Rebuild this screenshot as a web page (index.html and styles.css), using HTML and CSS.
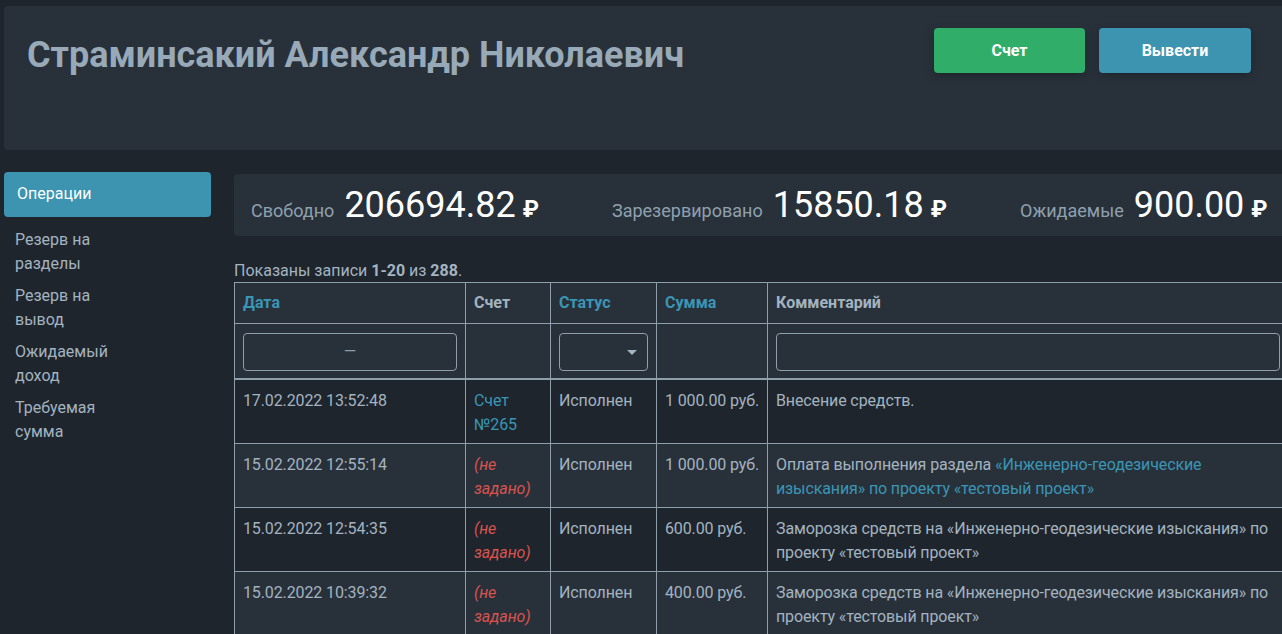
FILE: index.html
```html
<!DOCTYPE html>
<html lang="ru">
<head>
<meta charset="utf-8">
<title>Операции</title>
<link rel="stylesheet" href="styles.css">
</head>
<body>
<div class="page">
  <header class="head-card">
    <h1 class="title">Страминсакий Александр Николаевич</h1>
    <div class="actions">
      <a class="btn btn-green" href="#">Счет</a>
      <a class="btn btn-blue" href="#">Вывести</a>
    </div>
  </header>
  <div class="layout">
    <nav class="sidebar">
      <a class="nav-item active" href="#">Операции</a>
      <a class="nav-item" href="#"><span>Резерв на разделы</span></a>
      <a class="nav-item" href="#"><span>Резерв на вывод</span></a>
      <a class="nav-item" href="#"><span>Ожидаемый доход</span></a>
      <a class="nav-item" href="#"><span>Требуемая сумма</span></a>
    </nav>
    <main class="main">
      <div class="stats">
        <div class="stat"><span class="stat-label">Свободно</span><span class="stat-value">206694.82</span><span class="rub">₽</span></div>
        <div class="stat"><span class="stat-label">Зарезервировано</span><span class="stat-value">15850.18</span><span class="rub">₽</span></div>
        <div class="stat"><span class="stat-label">Ожидаемые</span><span class="stat-value">900.00</span><span class="rub">₽</span></div>
      </div>
      <div class="summary">Показаны записи <b>1-20</b> из <b>288</b>.</div>
      <table class="grid">
        <colgroup>
          <col class="c-date"><col class="c-acc"><col class="c-status"><col class="c-sum"><col class="c-comm">
        </colgroup>
        <thead>
          <tr class="head-row">
            <th><a href="#">Дата</a></th>
            <th>Счет</th>
            <th><a href="#">Статус</a></th>
            <th><a href="#">Сумма</a></th>
            <th>Комментарий</th>
          </tr>
          <tr class="filter-row">
            <td><div class="field field-date">—</div></td>
            <td></td>
            <td><div class="field field-select"><span class="caret"></span></div></td>
            <td></td>
            <td><div class="field"></div></td>
          </tr>
        </thead>
        <tbody>
          <tr class="odd">
            <td>17.02.2022 13:52:48</td>
            <td><a href="#">Счет №265</a></td>
            <td>Исполнен</td>
            <td class="sum">1 000.00 руб.</td>
            <td>Внесение средств.</td>
          </tr>
          <tr class="even">
            <td>15.02.2022 12:55:14</td>
            <td><span class="unset">(не задано)</span></td>
            <td>Исполнен</td>
            <td class="sum">1 000.00 руб.</td>
            <td>Оплата выполнения раздела <a href="#">«Инженерно-геодезические изыскания» по проекту «тестовый проект»</a></td>
          </tr>
          <tr class="odd">
            <td>15.02.2022 12:54:35</td>
            <td><span class="unset">(не задано)</span></td>
            <td>Исполнен</td>
            <td class="sum">600.00 руб.</td>
            <td>Заморозка средств на «Инженерно-геодезические изыскания» по проекту «тестовый проект»</td>
          </tr>
          <tr class="even">
            <td>15.02.2022 10:39:32</td>
            <td><span class="unset">(не задано)</span></td>
            <td>Исполнен</td>
            <td class="sum">400.00 руб.</td>
            <td>Заморозка средств на «Инженерно-геодезические изыскания» по проекту «тестовый проект»</td>
          </tr>
        </tbody>
      </table>
    </main>
  </div>
</div>
</body>
</html>
```
FILE: styles.css
```css
html, body {
  margin: 0;
  padding: 0;
  overflow: hidden;
  background: #1e252c;
}
body {
  font-family: Roboto, "Noto Sans", "Liberation Sans", sans-serif;
  color: #a4b3c0;
  font-size: 16px;
  line-height: 24px;
}
a { text-decoration: none; color: #3b95b5; }
.page {
  width: 1283px;
  margin-left: 4px;
  padding-top: 6px;
}
.head-card {
  background: #28313a;
  border-radius: 4px;
  min-height: 144px;
  box-sizing: border-box;
  padding: 22px 36px 22px 23px;
  display: flex;
  justify-content: space-between;
  align-items: flex-start;
}
.title {
  margin: 6px 0 0;
  font-size: 36px;
  line-height: 42px;
  font-weight: 700;
  color: #98a9b8;
}
.actions {
  display: flex;
  gap: 14px;
}
.btn {
  display: flex;
  align-items: center;
  justify-content: center;
  width: 151px;
  height: 45px;
  border-radius: 4px;
  color: #fff;
  font-weight: 700;
  font-size: 16px;
  box-shadow: 0 3px 8px rgba(0,0,0,0.25);
}
.btn-green { background: #30ad69; }
.btn-blue { background: #3c94b1; width: 152px; }
.layout {
  display: flex;
  gap: 23px;
  margin-top: 22px;
}
.sidebar {
  width: 207px;
  flex: none;
  display: flex;
  flex-direction: column;
}
.nav-item {
  display: block;
  color: #a4b3c0;
  padding: 4px 11px;
}
.nav-item span {
  display: block;
  max-width: 110px;
}
.nav-item.active {
  background: #3c94b1;
  color: #fff;
  border-radius: 4px;
  padding: 10px 13px 11px;
  margin-bottom: 7px;
}
.main {
  flex: 1;
  min-width: 0;
  padding-top: 2px;
}
.stats {
  background: #28313a;
  border-radius: 4px;
  height: 62px;
  box-sizing: border-box;
  padding: 9px 17px 0;
  display: flex;
  align-items: baseline;
  gap: 73px;
}
.stat {
  display: flex;
  align-items: baseline;
}
.stat-label {
  font-size: 18px;
  color: #8fa0ae;
  margin-right: 10px;
}
.stat-value {
  font-size: 36px;
  line-height: 44px;
  color: #fff;
}
.rub {
  font-size: 23px;
  font-weight: 700;
  color: #fff;
  margin-left: 7px;
}
.summary {
  margin-top: 23px;
  line-height: 24px;
  margin-bottom: -1px;
}
.summary b { color: #a4b3c0; }
.grid {
  border-collapse: collapse;
  table-layout: fixed;
  width: 1054px;
}
.c-date { width: 231px; }
.c-acc { width: 85px; }
.c-status { width: 106px; }
.c-sum { width: 111px; }
.c-comm { width: 521px; }
.grid th, .grid td {
  border: 1px solid #8e9eab;
  text-align: left;
  vertical-align: top;
  padding: 9px 8px 6px;
  font-size: 16px;
  line-height: 24px;
  letter-spacing: -0.12px;
}
.grid th {
  font-weight: 700;
  color: #a4b3c0;
  padding: 8px 8px 8px;
  letter-spacing: 0;
}
.grid td.sum { white-space: nowrap; }
.head-row, .filter-row { background: #28313a; }
.filter-row td {
  padding: 9px 8px 7px;
  border-bottom: 2px solid #8e9eab;
}
.field {
  height: 38px;
  box-sizing: border-box;
  border: 1px solid #8e9eab;
  border-radius: 4px;
  color: #8e9eab;
  position: relative;
}
.field-date {
  text-align: center;
  line-height: 36px;
}
.caret {
  position: absolute;
  right: 10px;
  top: 16px;
  width: 0;
  height: 0;
  border-left: 5px solid transparent;
  border-right: 5px solid transparent;
  border-top: 5px solid #a4b3c0;
}
.odd { background: #1e252c; }
.even { background: #28313a; }
.unset { color: #d9534f; font-style: italic; }
```
